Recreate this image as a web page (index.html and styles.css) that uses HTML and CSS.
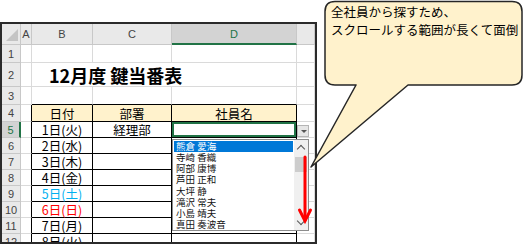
FILE: index.html
```html
<!DOCTYPE html>
<html lang="ja">
<head>
    <meta charset="UTF-8">
    <title>12月度 鍵当番表</title>
    <link rel="stylesheet" href="styles.css">
</head>
<body>
    <div class="page">
        <div class="sheet">
            <div class="grid">
                <!-- column headers -->
                <div class="hd corner"></div>
                <div class="hd col">A</div>
                <div class="hd col">B</div>
                <div class="hd col">C</div>
                <div class="hd col active">D</div>
                <div class="hd col"></div>

                <!-- row 1 -->
                <div class="hd row">1</div>
                <div class="c"></div><div class="c"></div><div class="c"></div><div class="c"></div><div class="c"></div>

                <!-- row 2 -->
                <div class="hd row">2</div>
                <div class="c"></div>
                <div class="c title">12月度 鍵当番表</div>
                <div class="c"></div>

                <!-- row 3 -->
                <div class="hd row">3</div>
                <div class="c"></div><div class="c above"></div><div class="c above"></div><div class="c above"></div><div class="c"></div>

                <!-- row 4 : table header -->
                <div class="hd row">4</div>
                <div class="c edge"></div>
                <div class="c t th">日付</div>
                <div class="c t th">部署</div>
                <div class="c t th">社員名</div>
                <div class="c"></div>

                <div class="hd row active">5</div>
                <div class="c edge"></div>
                <div class="c t">1日(火)</div>
                <div class="c t">経理部</div>
                <div class="c t current"></div>
                <div class="c"></div>

                <div class="hd row">6</div>
                <div class="c edge"></div>
                <div class="c t">2日(水)</div>
                <div class="c t"></div><div class="c t"></div><div class="c"></div>

                <div class="hd row">7</div>
                <div class="c edge"></div>
                <div class="c t">3日(木)</div>
                <div class="c t"></div><div class="c t"></div><div class="c"></div>

                <div class="hd row">8</div>
                <div class="c edge"></div>
                <div class="c t">4日(金)</div>
                <div class="c t"></div><div class="c t"></div><div class="c"></div>

                <div class="hd row">9</div>
                <div class="c edge"></div>
                <div class="c t sat">5日(土)</div>
                <div class="c t"></div><div class="c t"></div><div class="c"></div>

                <div class="hd row">10</div>
                <div class="c edge"></div>
                <div class="c t sun">6日(日)</div>
                <div class="c t"></div><div class="c t"></div><div class="c"></div>

                <div class="hd row">11</div>
                <div class="c edge"></div>
                <div class="c t">7日(月)</div>
                <div class="c t"></div><div class="c t"></div><div class="c"></div>

                <div class="hd row">12</div>
                <div class="c edge"></div>
                <div class="c t">8日(火)</div>
                <div class="c t"></div><div class="c t"></div><div class="c"></div>
            </div>

            <!-- data validation dropdown -->
            <div class="drop-btn"></div>
            <div class="dropdown">
                <ul class="items">
                    <li class="selected">熊倉 愛海</li>
                    <li>寺崎 香織</li>
                    <li>阿部 康博</li>
                    <li>芦田 正和</li>
                    <li>大坪 静</li>
                    <li>滝沢 常夫</li>
                    <li>小島 靖夫</li>
                    <li>真田 奏波音</li>
                </ul>
                <div class="scrollbar">
                    <div class="arrow up"></div>
                    <div class="thumb"></div>
                    <div class="arrow down"></div>
                </div>
            </div>
        </div>

        <!-- callout + red arrow -->
        <svg class="overlay" width="524" height="245" viewBox="0 0 524 245">
            <path class="bubble" d="M335 1.5 H512 Q522 1.5 522 11.5 V75 Q522 85 512 85 H408 L311 167 L356 85 H335 Q325 85 325 75 V11.5 Q325 1.5 335 1.5 Z"/>
            <line class="red" x1="305" y1="157" x2="305" y2="220"/>
            <polyline class="red" points="299.5,210 305,221 310.5,210"/>
        </svg>
        <div class="note">全社員から探すため、<br>スクロールする範囲が長くて面倒</div>
    </div>
</body>
</html>
```

FILE: styles.css
```css
body {
    margin: 0;
    background-color: white;
    font-family: "Noto Sans CJK JP", sans-serif;
}

.page {
    position: relative;
    width: 524px;
    height: 245px;
    overflow: hidden;
}

.sheet {
    position: relative;
    margin-top: 22px;
    width: 313px;
    height: 218px;
    border: 2px solid #2b2b2b;
    overflow: hidden;
}

.grid {
    display: grid;
    grid-template-columns: 19px 11px 61px 79px 125px 1fr;
    grid-template-rows: 21px 18px 24px 18px 17px repeat(8, 16px);
}

.grid > div {
    box-sizing: border-box;
    display: flex;
    align-items: center;
    justify-content: center;
    font-size: 12.5px;
    color: #000;
    white-space: nowrap;
}

/* headers */
.hd {
    background-color: #e9e9e9;
    border-right: 1px solid #c8c8c8;
    border-bottom: 1px solid #c8c8c8;
    font-family: "Liberation Sans", sans-serif;
    font-size: 11px !important;
    color: #444 !important;
}

.hd.active {
    background-color: #d3d3d3;
    color: #217346 !important;
}

.hd.col.active {
    border-bottom: 2px solid #217346;
}

.hd.row.active {
    border-right: 2px solid #217346;
}

.corner {
    position: relative;
}

.corner::after {
    content: "";
    position: absolute;
    right: 2px;
    bottom: 3px;
    width: 0;
    height: 0;
    border-left: 12px solid transparent;
    border-bottom: 12px solid #c4c4c4;
}

/* cells */
.c {
    border-right: 1px solid #dadada;
    border-bottom: 1px solid #dadada;
}

.title {
    grid-column: span 3;
    justify-content: flex-start !important;
    padding-left: 17px;
    font-size: 18px !important;
    font-weight: bold;
}

.above {
    border-bottom-color: #000;
}

.edge {
    border-right-color: #000;
}

.t {
    border-right-color: #000;
    border-bottom-color: #000;
}

.th {
    background-color: #fff2cc;
    font-size: 12.5px !important;
}

.current {
    box-shadow: inset 0 0 0 2px #217346;
}

.sat {
    color: #00b0f0 !important;
}

.sun {
    color: #ff0000 !important;
}

/* dropdown */
.drop-btn {
    position: absolute;
    left: 295px;
    top: 101px;
    width: 12px;
    height: 12px;
    box-sizing: border-box;
    border: 1px solid #b5b5b5;
    background-color: #e6e6e6;
}

.drop-btn::after {
    content: "";
    position: absolute;
    left: 3px;
    top: 4px;
    border-left: 3px solid transparent;
    border-right: 3px solid transparent;
    border-top: 3px solid #555;
}

.dropdown {
    position: absolute;
    left: 170px;
    top: 115px;
    width: 137px;
    height: 92px;
    box-sizing: border-box;
    border: 1px solid #8c8c8c;
    background-color: white;
    display: flex;
}

.items {
    flex: 1;
    list-style: none;
    margin: 0;
    padding: 1px 1px 0 1px;
    display: grid;
    grid-template-rows: repeat(8, 1fr);
}

.items li {
    font-size: 9.5px;
    line-height: 11px;
    padding-left: 2px;
    color: #111;
    white-space: nowrap;
}

.items li.selected {
    background-color: #0078d7;
    color: white;
}

.scrollbar {
    width: 14px;
    background-color: #f0f0f0;
    position: relative;
}

.thumb {
    position: absolute;
    left: 1px;
    right: 1px;
    top: 17px;
    height: 15px;
    background-color: #cdcdcd;
}

.arrow {
    position: absolute;
    left: 4px;
    width: 5px;
    height: 5px;
    border-left: 1px solid #555;
    border-top: 1px solid #555;
}

.arrow.up {
    top: 6px;
    transform: rotate(45deg);
}

.arrow.down {
    bottom: 6px;
    transform: rotate(225deg);
}

/* overlay */
.overlay {
    position: absolute;
    left: 0;
    top: 0;
}

.bubble {
    fill: #fff2cc;
    stroke: #262626;
    stroke-width: 1.5;
    stroke-linejoin: round;
}

.red {
    fill: none;
    stroke: #ff0000;
    stroke-width: 3;
    stroke-linecap: round;
}

.note {
    position: absolute;
    left: 331px;
    top: 3px;
    font-size: 12.5px;
    line-height: 18px;
    color: #000;
    white-space: nowrap;
}
```
